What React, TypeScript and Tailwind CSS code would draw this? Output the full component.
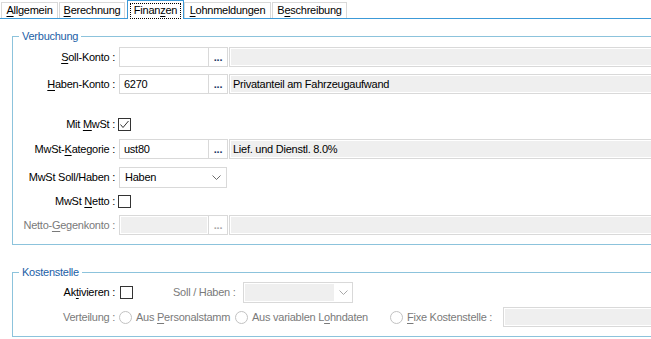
import type { ReactNode } from "react";

const U = ({ children }: { children: ReactNode }) => (
  <span className="underline underline-offset-[2px]">{children}</span>
);

function Chevron({ light }: { light?: boolean }) {
  return (
    <svg width="9" height="5" viewBox="0 0 9 5" className="shrink-0">
      <polyline
        points="0.5,0.5 4.5,4.5 8.5,0.5"
        fill="none"
        stroke={light ? "#a8a8a8" : "#6b6b6b"}
        strokeWidth="1"
      />
    </svg>
  );
}

function Dots({ disabled }: { disabled?: boolean }) {
  return (
    <div
      className={[
        "flex h-full w-[19px] shrink-0 items-end justify-center border-y border-r border-[#d9d9d9] bg-white pb-[3px] text-[11px] font-bold leading-none",
        disabled ? "text-[#a8a8a8]" : "text-[#1d3b66]",
      ].join(" ")}
    >
      ...
    </div>
  );
}

function Checkbox({ checked, className }: { checked?: boolean; className?: string }) {
  return (
    <div
      className={[
        "flex h-[13px] w-[13px] shrink-0 items-center justify-center border border-[#333333] bg-white",
        className ?? "",
      ].join(" ")}
    >
      {checked && (
        <svg width="11" height="11" viewBox="0 0 11 11">
          <polyline points="1.5,5.5 4,8.5 9.5,2" fill="none" stroke="#333333" strokeWidth="1" />
        </svg>
      )}
    </div>
  );
}

const Radio = () => (
  <div className="h-[13px] w-[13px] shrink-0 rounded-full border border-[#c2c2c2] bg-white" />
);

function Row({
  label,
  grey,
  className,
  children,
}: {
  label: ReactNode;
  grey?: boolean;
  className?: string;
  children: ReactNode;
}) {
  return (
    <div className={["flex items-center", className ?? ""].join(" ")}>
      <div
        className={[
          "w-[102px] shrink-0 whitespace-nowrap text-right",
          grey ? "text-[#7a7a7a]" : "text-black",
        ].join(" ")}
      >
        {label}
      </div>
      {children}
    </div>
  );
}

function Lookup({ value, desc, disabled }: { value?: string; desc?: string; disabled?: boolean }) {
  return (
    <div className="ml-[4px] flex h-full flex-1">
      <div
        className={[
          "flex h-full w-[90px] shrink-0 items-center border border-[#d9d9d9] px-[4px]",
          disabled ? "bg-[#efefef] shadow-[inset_0_0_0_1px_#ffffff]" : "bg-white",
        ].join(" ")}
      >
        {value}
      </div>
      <Dots disabled={disabled} />
      <div className="ml-[1px] flex h-full flex-1 items-center border border-[#d9d9d9] bg-[#efefef] px-[3px] shadow-[inset_0_0_0_1px_#ffffff]">
        {desc}
      </div>
    </div>
  );
}

function Tab({ w, children }: { w: string; children: ReactNode }) {
  return (
    <div
      className={[
        "h-[16px] shrink-0 border-x border-t border-[#d9d9d9] bg-white text-center leading-[15px]",
        w,
      ].join(" ")}
    >
      {children}
    </div>
  );
}

export default function App() {
  return (
    <div className="h-[339px] w-[651px] overflow-hidden bg-white font-['Liberation_Sans',Arial,sans-serif] text-[11px] tracking-[-0.25px] text-black">
      {/* Reiter */}
      <div className="flex h-[19px] items-end border-b border-[#3c9ad8] pl-[1px]">
        <Tab w="w-[57px]">
          <U>A</U>llgemein
        </Tab>
        <div className="ml-[1px]">
          <Tab w="w-[66px]">
            <U>B</U>erechnung
          </Tab>
        </div>
        <div className="mb-[-1px] ml-[2px] flex h-[19px] w-[57px] shrink-0 border-x border-t border-[#3c9ad8] bg-white px-[2px] pt-[2px]">
          <div className="flex flex-1 justify-center border border-dotted border-black leading-[13px]">
            <span>
              Finan<U>z</U>en
            </span>
          </div>
        </div>
        <Tab w="w-[87px]">
          <U>L</U>ohnmeldungen
        </Tab>
        <div className="ml-[1px]">
          <Tab w="w-[75px]">
            B<U>e</U>schreibung
          </Tab>
        </div>
      </div>

      {/* Verbuchung */}
      <fieldset className="ml-[12px] mt-[10px] w-[700px] border border-[#8cc3dc] px-0 pb-[9px] pt-[4px]">
        <legend className="ml-[6px] px-[3px] leading-[14px] text-[#1b5ea6]">Verbuchung</legend>

        <Row className="h-[20px]" label={<><U>S</U>oll-Konto :</>}>
          <Lookup />
        </Row>
        <Row className="mt-[7px] h-[20px]" label={<><U>H</U>aben-Konto :</>}>
          <Lookup value="6270" desc="Privatanteil am Fahrzeugaufwand" />
        </Row>
        <Row className="mt-[20px] h-[20px]" label={<>Mit <U>M</U>wSt :</>}>
          <Checkbox checked className="ml-[3px]" />
        </Row>
        <Row className="mt-[5px] h-[20px]" label={<>MwSt-<U>K</U>ategorie :</>}>
          <Lookup value="ust80" desc="Lief. und Dienstl. 8.0%" />
        </Row>
        <Row className="mt-[8px] h-[21px]" label="MwSt Soll/Haben :">
          <div className="ml-[4px] flex h-full w-[108px] items-center justify-between border border-[#d9d9d9] bg-white pl-[5px] pr-[5px]">
            <span>Haben</span>
            <Chevron />
          </div>
        </Row>
        <Row className="mt-[3px] h-[20px]" label={<>MwSt <U>N</U>etto :</>}>
          <Checkbox className="ml-[3px]" />
        </Row>
        <Row grey className="mt-[4px] h-[20px]" label={<>Netto-<U>G</U>egenkonto :</>}>
          <Lookup disabled />
        </Row>
      </fieldset>

      {/* Kostenstelle */}
      <fieldset className="ml-[12px] mt-[20px] w-[700px] border border-[#8cc3dc] px-0 pb-[9px] pt-[3px]">
        <legend className="ml-[6px] px-[3px] leading-[14px] text-[#1b5ea6]">Kostenstelle</legend>

        <Row className="h-[21px]" label={<>Ak<U>t</U>ivieren :</>}>
          <Checkbox className="ml-[5px]" />
          <div className="ml-[40px] w-[70px] shrink-0 whitespace-nowrap text-[#7a7a7a]">Soll / Haben :</div>
          <div className="flex h-full w-[110px] shrink-0 border border-[#d9d9d9] bg-white">
            <div className="m-[1px] flex-1 bg-[#efefef]" />
            <div className="flex w-[17px] items-center justify-center">
              <Chevron light />
            </div>
          </div>
        </Row>
        <Row grey className="mt-[4px] h-[20px]" label="Verteilung :">
          <div className="ml-[4px] flex w-[116px] shrink-0 items-center gap-[4px] whitespace-nowrap text-[#7a7a7a]">
            <Radio />
            <span>
              Aus <U>P</U>ersonalstamm
            </span>
          </div>
          <div className="flex w-[155px] shrink-0 items-center gap-[4px] whitespace-nowrap text-[#7a7a7a]">
            <Radio />
            <span>
              Aus variablen L<U>o</U>hndaten
            </span>
          </div>
          <div className="flex w-[113px] shrink-0 items-center gap-[4px] whitespace-nowrap text-[#7a7a7a]">
            <Radio />
            <span>
              <U>F</U>ixe Kostenstelle :
            </span>
          </div>
          <div className="h-full flex-1 border border-[#d9d9d9] bg-[#efefef] shadow-[inset_0_0_0_1px_#ffffff]" />
        </Row>
      </fieldset>
    </div>
  );
}
